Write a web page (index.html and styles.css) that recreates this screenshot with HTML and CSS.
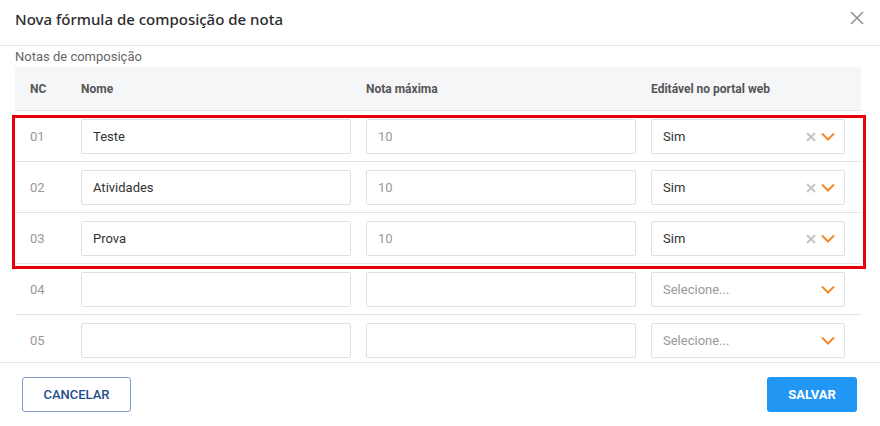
FILE: index.html
```html
<!DOCTYPE html>
<html lang="pt">
<head>
<meta charset="utf-8">
<title>Nova fórmula de composição de nota</title>
<link rel="stylesheet" href="styles.css">
</head>
<body>
<div class="modal">
  <header class="modal-header">
    <h1 class="modal-title">Nova fórmula de composição de nota</h1>
    <button class="close" aria-label="Fechar">
      <svg width="14" height="14" viewBox="0 0 14 14"><path d="M1 1L13 13M13 1L1 13" stroke="#8a8f95" stroke-width="1.5" fill="none"/></svg>
    </button>
  </header>
  <div class="modal-body">
    <div class="section-label">Notas de composição</div>
    <div class="table">
      <div class="row head">
        <div class="cell">NC</div>
        <div class="cell">Nome</div>
        <div class="cell">Nota máxima</div>
        <div class="cell last">Editável no portal web</div>
      </div>
      <div class="row">
        <div class="cell nc">01</div>
        <div class="cell"><div class="input">Teste</div></div>
        <div class="cell"><div class="input muted">10</div></div>
        <div class="cell last"><div class="input select"><span>Sim</span><span class="icons"><svg class="clear" width="10" height="10" viewBox="0 0 10 10"><path d="M1 1L9 9M9 1L1 9" stroke="#c4c4c4" stroke-width="2"/></svg><svg class="chev" width="14" height="9" viewBox="0 0 14 9"><path d="M1 1.5L7 7.5L13 1.5" stroke="#f5862a" stroke-width="2" fill="none"/></svg></span></div></div>
      </div>
      <div class="row">
        <div class="cell nc">02</div>
        <div class="cell"><div class="input">Atividades</div></div>
        <div class="cell"><div class="input muted">10</div></div>
        <div class="cell last"><div class="input select"><span>Sim</span><span class="icons"><svg class="clear" width="10" height="10" viewBox="0 0 10 10"><path d="M1 1L9 9M9 1L1 9" stroke="#c4c4c4" stroke-width="2"/></svg><svg class="chev" width="14" height="9" viewBox="0 0 14 9"><path d="M1 1.5L7 7.5L13 1.5" stroke="#f5862a" stroke-width="2" fill="none"/></svg></span></div></div>
      </div>
      <div class="row">
        <div class="cell nc">03</div>
        <div class="cell"><div class="input">Prova</div></div>
        <div class="cell"><div class="input muted">10</div></div>
        <div class="cell last"><div class="input select"><span>Sim</span><span class="icons"><svg class="clear" width="10" height="10" viewBox="0 0 10 10"><path d="M1 1L9 9M9 1L1 9" stroke="#c4c4c4" stroke-width="2"/></svg><svg class="chev" width="14" height="9" viewBox="0 0 14 9"><path d="M1 1.5L7 7.5L13 1.5" stroke="#f5862a" stroke-width="2" fill="none"/></svg></span></div></div>
      </div>
      <div class="row">
        <div class="cell nc">04</div>
        <div class="cell"><div class="input"></div></div>
        <div class="cell"><div class="input"></div></div>
        <div class="cell last"><div class="input select"><span class="placeholder">Selecione...</span><span class="icons"><svg class="chev" width="14" height="9" viewBox="0 0 14 9"><path d="M1 1.5L7 7.5L13 1.5" stroke="#f5862a" stroke-width="2" fill="none"/></svg></span></div></div>
      </div>
      <div class="row">
        <div class="cell nc">05</div>
        <div class="cell"><div class="input"></div></div>
        <div class="cell"><div class="input"></div></div>
        <div class="cell last"><div class="input select"><span class="placeholder">Selecione...</span><span class="icons"><svg class="chev" width="14" height="9" viewBox="0 0 14 9"><path d="M1 1.5L7 7.5L13 1.5" stroke="#f5862a" stroke-width="2" fill="none"/></svg></span></div></div>
      </div>
      <div class="highlight"></div>
    </div>
  </div>
  <footer class="modal-footer">
    <button class="btn btn-outline">CANCELAR</button>
    <button class="btn btn-primary">SALVAR</button>
  </footer>
</div>
</body>
</html>
```
FILE: styles.css
```css
* { box-sizing: border-box; }
html, body { margin: 0; padding: 0; background: #fff; }
body { font-family: Roboto, "Liberation Sans", sans-serif; color: #333; width: 880px; height: 426px; overflow: hidden; }

.modal { display: flex; flex-direction: column; height: 426px; }

.modal-header {
  height: 46px;
  border-bottom: 1px solid #e3e5e8;
  display: flex;
  align-items: flex-start;
  justify-content: space-between;
  padding: 8px 16px 0 15px;
}
.modal-title {
  margin: 0;
  font-family: "Noto Sans", "Open Sans", sans-serif;
  font-size: 15px;
  font-weight: 500;
  line-height: 22px;
  color: #2b2b2b;
}
.close {
  border: 0; background: none; padding: 0; margin-top: 3px;
  width: 14px; height: 14px; display: flex; cursor: pointer;
}

.modal-body {
  height: 316px;
  overflow: hidden;
  padding: 0 19px 0 15px;
}
.section-label {
  font-size: 13px;
  line-height: 21px;
  color: #666;
}

.table { position: relative; width: 846px; }
.row {
  display: grid;
  grid-template-columns: 51px 285px 285px 225px;
  border-bottom: 1px solid #e2e5e8;
  padding: 8px 0 7px;
}
.row.head {
  background: #f5f6f8;
  height: 44px;
  padding: 0;
  align-items: center;
  font-size: 12px;
  font-weight: 700;
  color: #555;
}
.cell { padding-left: 15px; display: flex; align-items: center; }
.cell.last { padding-right: 16px; }
.cell.nc { font-size: 13px; color: #999; }

.input {
  width: 100%;
  height: 35px;
  border: 1px solid #dde1e4;
  border-radius: 2px;
  background: #fff;
  padding: 0 11px;
  font-size: 13px;
  color: #333;
  display: flex;
  align-items: center;
}
.input.muted { color: #999; }
.select { justify-content: space-between; padding-right: 9px; }
.placeholder { color: #999; }
.icons { display: flex; align-items: center; gap: 5px; }

.highlight {
  position: absolute;
  left: -3px;
  top: 48px;
  width: 854px;
  height: 154px;
  border: 3px solid #e8000b;
  pointer-events: none;
}

.modal-footer {
  border-top: 1px solid #e3e5e8;
  display: flex;
  justify-content: space-between;
  align-items: flex-start;
  padding: 14px 23px 0 22px;
  flex: 1;
}
.btn {
  height: 35px;
  border-radius: 3px;
  font-family: Roboto, "Liberation Sans", sans-serif;
  font-size: 13px;
  cursor: pointer;
}
.btn-outline {
  width: 109px;
  background: #fff;
  border: 1px solid #7d9dc8;
  color: #1f4e8c;
  font-weight: 500;
}
.btn-primary {
  width: 90px;
  background: #2196f3;
  border: 0;
  color: #fff;
  font-weight: 700;
}
```
